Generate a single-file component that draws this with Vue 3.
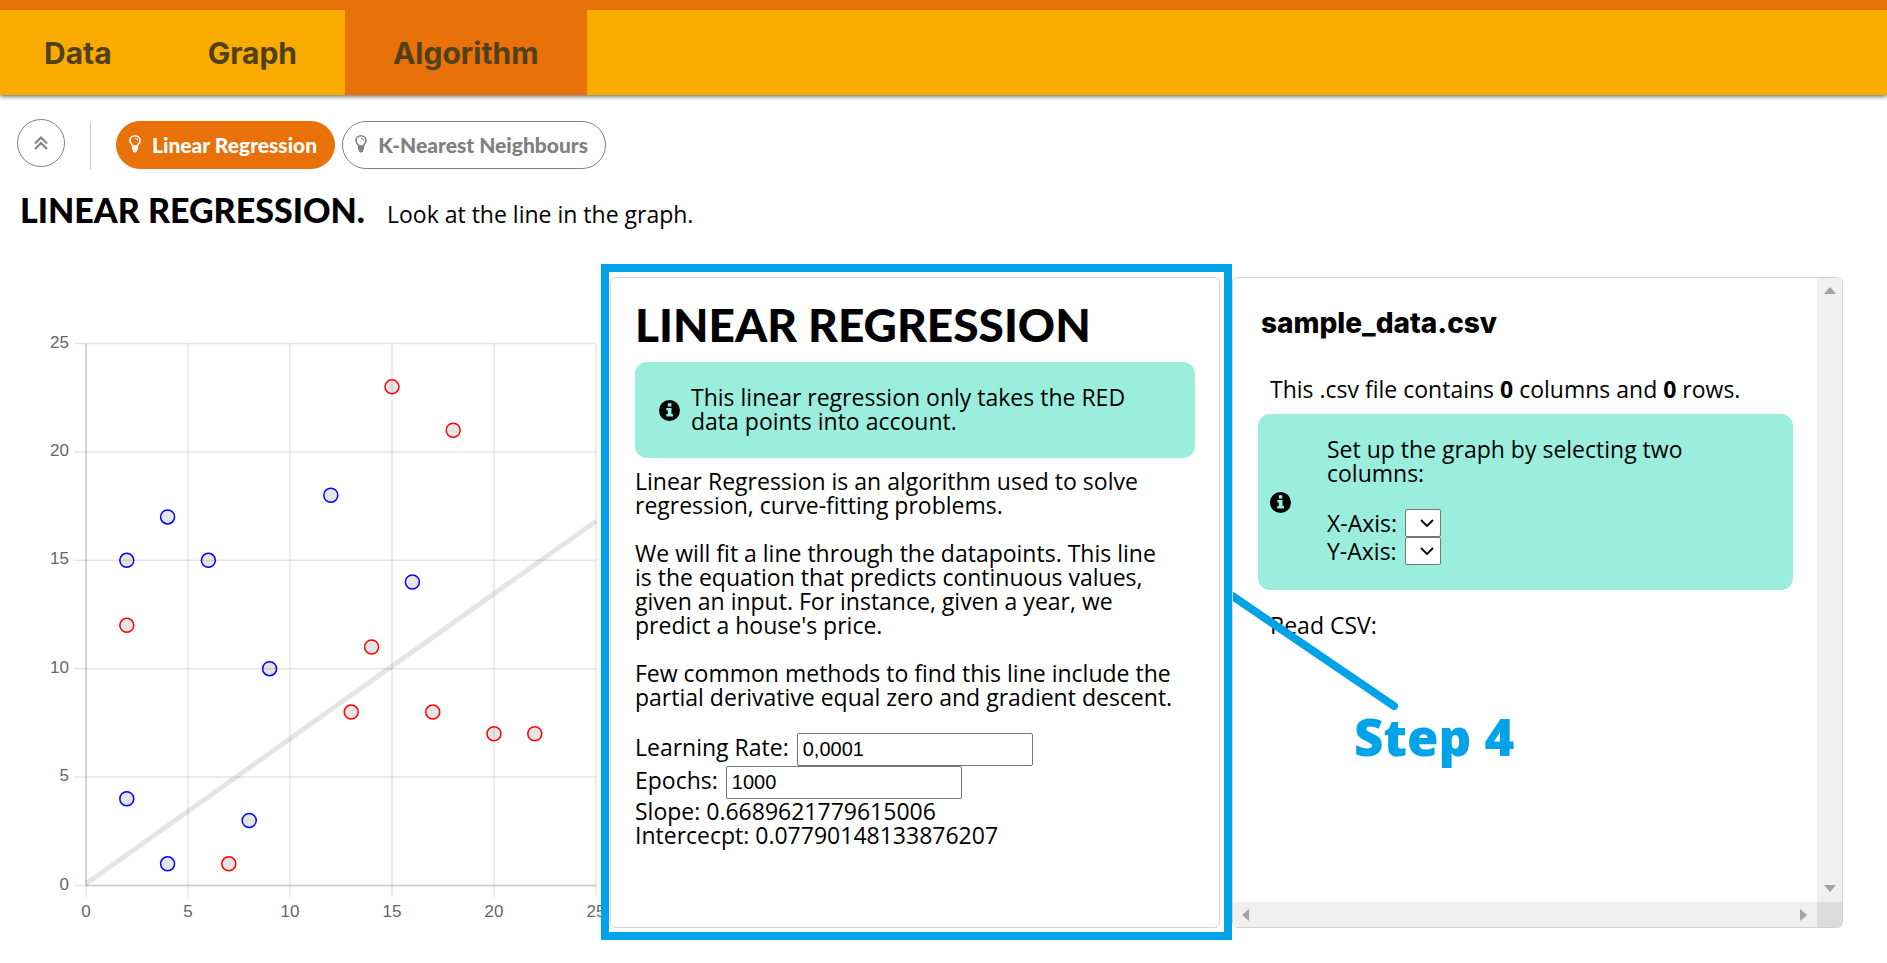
<script setup>
import { ref } from 'vue'

const tabs = ['Data', 'Graph', 'Algorithm']
const activeTab = ref('Algorithm')
const algorithms = ['Linear Regression', 'K-Nearest Neighbours']
const activeAlgorithm = ref('Linear Regression')
const learningRate = ref('0,0001')
const epochs = ref('1000')

const slope = 0.6689621779615006
const intercept = 0.07790148133876207
const ticks = [0, 5, 10, 15, 20, 25]
const points = [
  { x: 15, y: 23, kind: 'red' },
  { x: 18, y: 21, kind: 'red' },
  { x: 2, y: 12, kind: 'red' },
  { x: 14, y: 11, kind: 'red' },
  { x: 13, y: 8, kind: 'red' },
  { x: 17, y: 8, kind: 'red' },
  { x: 20, y: 7, kind: 'red' },
  { x: 22, y: 7, kind: 'red' },
  { x: 7, y: 1, kind: 'red' },
  { x: 12, y: 18, kind: 'blue' },
  { x: 4, y: 17, kind: 'blue' },
  { x: 2, y: 15, kind: 'blue' },
  { x: 6, y: 15, kind: 'blue' },
  { x: 16, y: 14, kind: 'blue' },
  { x: 9, y: 10, kind: 'blue' },
  { x: 2, y: 4, kind: 'blue' },
  { x: 8, y: 3, kind: 'blue' },
  { x: 4, y: 1, kind: 'blue' }
]
const px = (v) => 86 + v * 20.4
const py = (v) => 621.5 - v * 21.68
</script>

<template>
  <div class="page">
    <nav class="tabs">
      <button
        v-for="t in tabs"
        :key="t"
        type="button"
        class="tab"
        :class="{ active: t === activeTab }"
        @click="activeTab = t"
      >{{ t }}</button>
    </nav>

    <div class="toolbar">
      <button type="button" class="collapse" aria-label="Collapse">
        <svg width="14" height="14" viewBox="0 0 14 14"><path d="M1 7.500 7 1.500l6 6M1 13l6-6 6 6" fill="none" stroke="currentColor" stroke-width="2" /></svg>
      </button>
      <span class="divider"></span>
      <div class="pills">
        <button
          v-for="a in algorithms"
          :key="a"
          type="button"
          class="pill"
          :class="{ active: a === activeAlgorithm }"
          @click="activeAlgorithm = a"
        >
          <svg width="12" height="18" viewBox="0 0 12 18">
            <path d="M3.600 11C3.400 9.200 1 8.400 1 5.500A5 4.700 0 0 1 11 5.500C11 8.400 8.600 9.200 8.400 11Z" fill="none" stroke="currentColor" stroke-width="1.600" />
            <path d="M6 3.200A2.400 2.400 0 0 1 8.500 5.500" fill="none" stroke="currentColor" />
            <path d="M3 11h6v3.500L8 15v1.500L6.800 17.500H5.200L4 16.500V15L3 14.500Z" fill="currentColor" />
          </svg>
          <span>{{ a }}</span>
        </button>
      </div>
    </div>

    <header class="intro">
      <h2>LINEAR REGRESSION.</h2>
      <p>Look at the line in the graph.</p>
    </header>

    <main class="workspace">
      <section class="chart">
        <svg viewBox="0 0 601 676" role="img" aria-label="Scatter plot with regression line">
          <g v-for="t in ticks" :key="t">
            <line :class="['grid', { zero: t === 0 }]" :x1="px(t)" :x2="px(t)" :y1="py(25)" :y2="py(0)" />
            <line class="grid" :x1="px(t)" :x2="px(t)" :y1="py(0)" y2="633" />
            <line :class="['grid', { zero: t === 0 }]" x1="86" :x2="px(25)" :y1="py(t)" :y2="py(t)" />
            <line class="grid" x1="74" x2="86" :y1="py(t)" :y2="py(t)" />
            <text :x="px(t)" y="653" text-anchor="middle">{{ t }}</text>
            <text x="69" :y="py(t) + 4" text-anchor="end">{{ t }}</text>
          </g>
          <line class="fit" :x1="px(0)" :y1="py(intercept)" :x2="px(25)" :y2="py(25 * slope + intercept)" />
          <circle v-for="(p, i) in points" :key="i" :class="p.kind" :cx="px(p.x)" :cy="py(p.y)" r="7" />
        </svg>
      </section>

      <div class="highlight">
        <section class="card explain">
          <h1>LINEAR REGRESSION</h1>
          <div class="note">
            <svg class="info" viewBox="0 0 22 22"><circle cx="11" cy="11" r="11" /><path d="M9.200 3.500h3.800v3.200H9.200ZM7.700 8.500h5.400v6.200h1.500v2.600H7.700v-2.600h1.500v-3.600H7.700Z" /></svg>
            <p>This linear regression only takes the RED<br>data points into account.</p>
          </div>
          <p>Linear Regression is an algorithm used to solve<br>regression, curve-fitting problems.</p>
          <p>We will fit a line through the datapoints. This line<br>is the equation that predicts continuous values,<br>given an input. For instance, given a year, we<br>predict a house's price.</p>
          <p>Few common methods to find this line include the<br>partial derivative equal zero and gradient descent.</p>
          <div class="field"><label for="rate">Learning Rate:</label><input id="rate" v-model="learningRate" type="text"></div>
          <div class="field"><label for="epochs">Epochs:</label><input id="epochs" v-model="epochs" type="text"></div>
          <div>Slope: {{ slope }}</div>
          <div>Intercecpt: {{ intercept }}</div>
        </section>
      </div>

      <section class="card file">
        <div class="file-body">
          <h3>sample_data.csv</h3>
          <p class="inset">This .csv file contains <b>0</b> columns and <b>0</b> rows.</p>
          <div class="note setup">
            <svg class="info" viewBox="0 0 22 22"><circle cx="11" cy="11" r="11" /><path d="M9.200 3.500h3.800v3.200H9.200ZM7.700 8.500h5.400v6.200h1.500v2.600H7.700v-2.600h1.500v-3.600H7.700Z" /></svg>
            <div>
              <p>Set up the graph by selecting two<br>columns:</p>
              <div v-for="axis in ['X', 'Y']" :key="axis" class="axis">
                <label :for="'axis-' + axis">{{ axis }}-Axis:</label>
                <span class="picker">
                  <select :id="'axis-' + axis"></select>
                  <svg width="14" height="8" viewBox="0 0 14 8"><path d="m1 1 6 6 6-6" fill="none" stroke="#111" stroke-width="2" /></svg>
                </span>
              </div>
            </div>
          </div>
          <p class="inset">Read CSV:</p>
        </div>
        <div class="bar vertical">
          <svg width="12" height="8" viewBox="0 0 12 8"><path d="M6 0 12 7H0Z" /></svg>
          <svg width="12" height="8" viewBox="0 0 12 8"><path d="M6 7 12 0H0Z" /></svg>
        </div>
        <div class="bar horizontal">
          <svg width="8" height="12" viewBox="0 0 8 12"><path d="M0 6 7 0V12Z" /></svg>
          <svg width="8" height="12" viewBox="0 0 8 12"><path d="M7 6 0 0V12Z" /></svg>
        </div>
        <div class="corner"></div>
        <div class="callout">
          <svg width="170" height="120" viewBox="0 0 170 120"><path d="M-8 0 161 115" fill="none" stroke="#00a2e8" stroke-width="8" stroke-linecap="round" /></svg>
          <strong>Step 4</strong>
        </div>
      </section>
    </main>
  </div>
</template>

<style>
body {
  margin: 0;
  background: #fff;
}
</style>

<style scoped>
.page {
  font-family: "Open Sans", "Noto Sans", sans-serif;
  font-size: 23px;
  line-height: 24px;
  color: #000;
  overflow: hidden;
}
h1, h2, h3, p {
  margin: 0;
}
h1, h2, .pill {
  font-family: Lato, sans-serif;
  font-weight: 900;
}
h3, .tab {
  font-family: Inter, sans-serif;
  font-weight: 700;
}
button {
  border: 0;
  background: none;
  padding: 0;
  cursor: pointer;
}
.tabs {
  display: flex;
  height: 85px;
  border-top: 10px solid #e8710a;
  background: #f9ab00;
  box-shadow: 0 1px 5px rgba(0, 0, 0, 0.7);
}
.tab {
  padding: 0 48px;
  font-size: 30px;
  color: #50401b;
}
.tab:first-child {
  padding-left: 44px;
}
.tab.active {
  background: #e8710a;
}
.toolbar {
  display: flex;
  align-items: center;
  height: 48px;
  padding: 26px 17px 0;
}
.collapse {
  display: grid;
  place-items: center;
  width: 48px;
  height: 48px;
  border: 1px solid #808080;
  border-radius: 50%;
  color: #808080;
  margin-top: -4px;
}
.divider {
  width: 1px;
  height: 48px;
  margin: 0 25px;
  background: #ccc;
}
.pills {
  display: flex;
  gap: 7px;
}
.pill {
  display: flex;
  align-items: center;
  gap: 11px;
  height: 48px;
  padding: 0 17px 2px 12px;
  border: 1px solid #808080;
  border-radius: 24px;
  font-size: 21px;
  color: #808080;
}
.pill.active {
  border-color: #e8710a;
  background: #e8710a;
  color: #fff;
}
.intro {
  display: flex;
  align-items: baseline;
  gap: 22px;
  height: 48px;
  padding: 21px 20px 26px;
}
.intro h2 {
  font-size: 34px;
  line-height: 40px;
}
.workspace {
  display: grid;
  grid-template-columns: 601fr 631fr 611fr;
  padding-right: 44px;
}
.chart svg {
  display: block;
  width: 100%;
}
.chart text {
  font: 17px "Liberation Sans", Arial, sans-serif;
  fill: #666;
}
.grid {
  stroke: rgba(0, 0, 0, 0.1);
  stroke-width: 1.5;
}
.grid.zero {
  stroke: rgba(0, 0, 0, 0.22);
}
.fit {
  stroke: rgba(0, 0, 0, 0.1);
  stroke-width: 5;
}
circle.red, circle.blue {
  fill: rgba(0, 0, 0, 0.1);
  stroke-width: 1.5;
}
circle.red {
  stroke: #f00;
}
circle.blue {
  stroke: #00f;
}
.highlight {
  display: flex;
  border: 8px solid #00a2e8;
  padding: 5px 4px 4px 1px;
}
.card {
  box-sizing: border-box;
  border: 1px solid #d3d3d3;
  border-radius: 6px;
}
.explain {
  flex: 1;
  padding: 20px 24px;
}
.explain h1 {
  font-size: 46px;
  line-height: 54px;
  margin-bottom: 10px;
}
.explain > p {
  margin-bottom: 24px;
}
.note {
  display: flex;
  align-items: center;
  gap: 11px;
  padding: 23px 24px 25px;
  border-radius: 12px;
  background: #9beedd;
}
.explain .note {
  margin-bottom: 11px;
}
.info {
  flex: none;
  width: 21px;
  height: 21px;
  margin-top: 2px;
}
.info path {
  fill: #9beedd;
}
.field {
  display: flex;
  align-items: baseline;
  gap: 8px;
  height: 33px;
}
.field input {
  box-sizing: border-box;
  width: 236px;
  height: 33px;
  padding: 1px 5px;
  border: 1px solid #767676;
  border-radius: 2px;
  background: #fff;
  font: 20px "Liberation Sans", Arial, sans-serif;
  color: #000;
}
.file {
  position: relative;
  display: grid;
  grid-template-columns: 1fr 25px;
  grid-template-rows: 1fr 25px;
  margin: 13px 0 12px;
}
.file-body {
  padding: 27px 24px 0 25px;
}
.file h3 {
  padding-left: 3px;
  font-size: 28px;
  font-weight: 800;
  line-height: 36px;
  margin-bottom: 36px;
}
.inset {
  padding-left: 12px;
}
.setup {
  gap: 36px;
  margin: 13px 0 23px;
  padding: 23px 12px 25px;
}
.setup p {
  margin-bottom: 24px;
}
.axis {
  display: flex;
  align-items: center;
  gap: 8px;
  height: 28px;
}
.picker {
  position: relative;
  display: flex;
}
.picker select {
  appearance: none;
  width: 36px;
  height: 28px;
  border: 1px solid #767676;
  border-radius: 2px;
  background: #fff;
}
.picker svg {
  position: absolute;
  top: 10px;
  right: 7px;
  pointer-events: none;
}
.bar {
  display: flex;
  justify-content: space-between;
  align-items: center;
  background: #f0f0f0;
  fill: #a3a3a3;
}
.vertical {
  flex-direction: column;
  padding: 9px 0;
}
.horizontal {
  padding: 0 9px;
}
.corner {
  background: #dcdcdc;
}
.callout {
  position: absolute;
  left: 0;
  top: 313px;
  display: flex;
  flex-direction: column;
  color: #00a2e8;
}
.callout strong {
  padding-left: 121px;
  font-size: 51px;
  font-weight: 800;
  line-height: 50px;
}
</style>
